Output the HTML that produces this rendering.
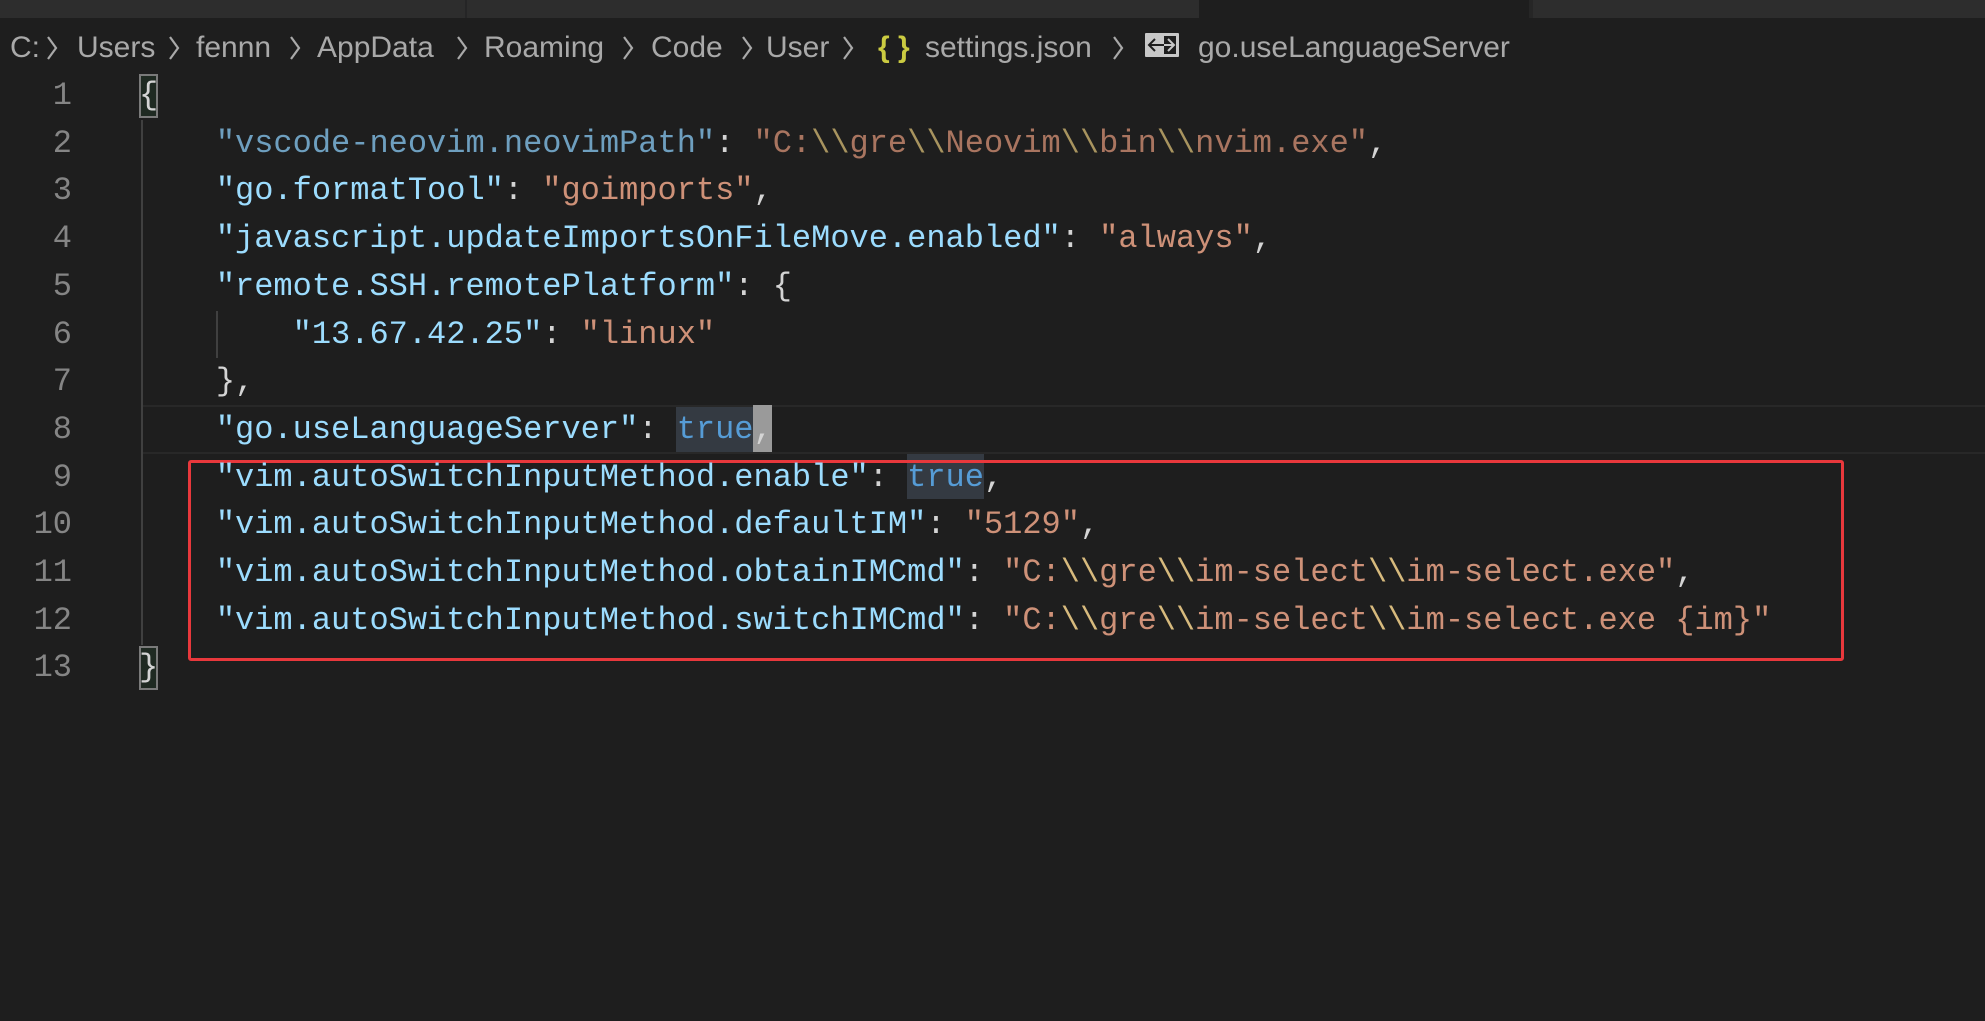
<!DOCTYPE html>
<html><head><meta charset="utf-8"><style>
html,body{margin:0;padding:0;width:1985px;height:1021px;background:#1e1e1e;overflow:hidden;position:relative}
.tabs{position:absolute;left:0;top:0;width:1985px;height:18px;background:#2d2d2d}
.tabs div{position:absolute;top:0;height:18px}
.bc{position:absolute;top:26px;height:44px;font:30px "Liberation Sans",sans-serif;color:#a9a9a9;line-height:44px;white-space:nowrap}
.ln{position:absolute;left:0;width:72px;text-align:right;font:32px/47.7px "Liberation Mono",monospace;color:#858585}
.cd{position:absolute;left:139px;font:32px/47.7px "Liberation Mono",monospace;color:#d4d4d4;white-space:pre}
.k{color:#9cdcfe}.s{color:#ce9178}.e{color:#d7ba7d}.t{color:#569cd6}
.k2{color:#6e9fbf}.s2{color:#a97560}.e2{color:#a8945f}
</style></head><body>
<div class="tabs">
<div style="left:0;width:465px;background:#2d2d2d;border-right:2px solid #252526"></div>
<div style="left:467px;width:732px;background:#2d2d2d"></div>
<div style="left:1199px;width:330px;background:#1e1e1e"></div>
<div style="left:1529px;width:456px;background:#2d2d2d;border-left:4px solid #262626"></div>
</div>
<span class="bc" style="left:10px">C:</span>
<span class="bc" style="left:77px">Users</span>
<span class="bc" style="left:196px">fennn</span>
<span class="bc" style="left:317px">AppData</span>
<span class="bc" style="left:484px">Roaming</span>
<span class="bc" style="left:651px">Code</span>
<span class="bc" style="left:766px">User</span>
<span class="bc" style="left:878px;color:#cbcb41;font-weight:bold">{ }</span>
<span class="bc" style="left:925px">settings.json</span>
<span class="bc" style="left:1198px">go.useLanguageServer</span>
<svg width="1985" height="80" style="position:absolute;left:0;top:0">
<g fill="none" stroke="#a9a9a9" stroke-width="2.2">
<polyline points="48,37 56,48 48,59"/><polyline points="170,37 178,48 170,59"/><polyline points="291,37 299,48 291,59"/><polyline points="458,37 466,48 458,59"/><polyline points="624,37 632,48 624,59"/><polyline points="743,37 751,48 743,59"/><polyline points="844,37 852,48 844,59"/><polyline points="1114,37 1122,48 1114,59"/>
</g>
<rect x="1145" y="33" width="34" height="24" fill="#c8c8c8" rx="1"/>
<rect x="1164" y="36" width="12" height="18" fill="#1e1e1e"/>
<g fill="none" stroke="#1e1e1e" stroke-width="2"><polyline points="1155,39 1149,45 1155,51"/><line x1="1149" y1="45" x2="1164" y2="45"/></g>
<g fill="none" stroke="#c8c8c8" stroke-width="2"><polyline points="1168,39 1174,45 1168,51"/><line x1="1164" y1="45" x2="1174" y2="45"/></g>
</svg>
<div style="position:absolute;left:142px;top:405px;width:1843px;height:45px;border-top:2px solid #282828;border-bottom:2px solid #282828"></div>
<div style="position:absolute;left:141px;top:120px;width:2px;height:525px;background:#404040"></div>
<div style="position:absolute;left:216px;top:311px;width:2px;height:47px;background:#404040"></div>
<div style="position:absolute;left:139px;top:74px;width:19px;height:44px;border:2px solid #7a7a7a;box-sizing:border-box;background:#1f2a22"></div>
<div style="position:absolute;left:139px;top:646px;width:19px;height:44px;border:2px solid #7a7a7a;box-sizing:border-box;background:#1f2a22"></div>
<div style="position:absolute;left:676px;top:407px;width:77px;height:45px;background:#343a42"></div>
<div style="position:absolute;left:753px;top:405px;width:19px;height:47px;background:#9a9a9a"></div>
<div style="position:absolute;left:907px;top:454px;width:77px;height:45px;background:#343a42"></div>
<div style="position:absolute;left:188px;top:460px;width:1656px;height:201px;border:3px solid #e8383c;box-sizing:border-box;border-radius:3px"></div>
<div class="ln" style="top:72px">1<br>2<br>3<br>4<br>5<br>6<br>7<br>8<br>9<br>10<br>11<br>12<br>13</div>
<div class="cd" style="top:72px">{
    <span class="k2">"vscode-neovim.neovimPath"</span>: <span class="s2">"C:<span class="e2">\\</span>gre<span class="e2">\\</span>Neovim<span class="e2">\\</span>bin<span class="e2">\\</span>nvim.exe"</span>,
    <span class="k">"go.formatTool"</span>: <span class="s">"goimports"</span>,
    <span class="k">"javascript.updateImportsOnFileMove.enabled"</span>: <span class="s">"always"</span>,
    <span class="k">"remote.SSH.remotePlatform"</span>: {
        <span class="k">"13.67.42.25"</span>: <span class="s">"linux"</span>
    },
    <span class="k">"go.useLanguageServer"</span>: <span class="t">true</span>,
    <span class="k">"vim.autoSwitchInputMethod.enable"</span>: <span class="t">true</span>,
    <span class="k">"vim.autoSwitchInputMethod.defaultIM"</span>: <span class="s">"5129"</span>,
    <span class="k">"vim.autoSwitchInputMethod.obtainIMCmd"</span>: <span class="s">"C:<span class="e">\\</span>gre<span class="e">\\</span>im-select<span class="e">\\</span>im-select.exe"</span>,
    <span class="k">"vim.autoSwitchInputMethod.switchIMCmd"</span>: <span class="s">"C:<span class="e">\\</span>gre<span class="e">\\</span>im-select<span class="e">\\</span>im-select.exe {im}"</span>
}</div>
</body></html>
